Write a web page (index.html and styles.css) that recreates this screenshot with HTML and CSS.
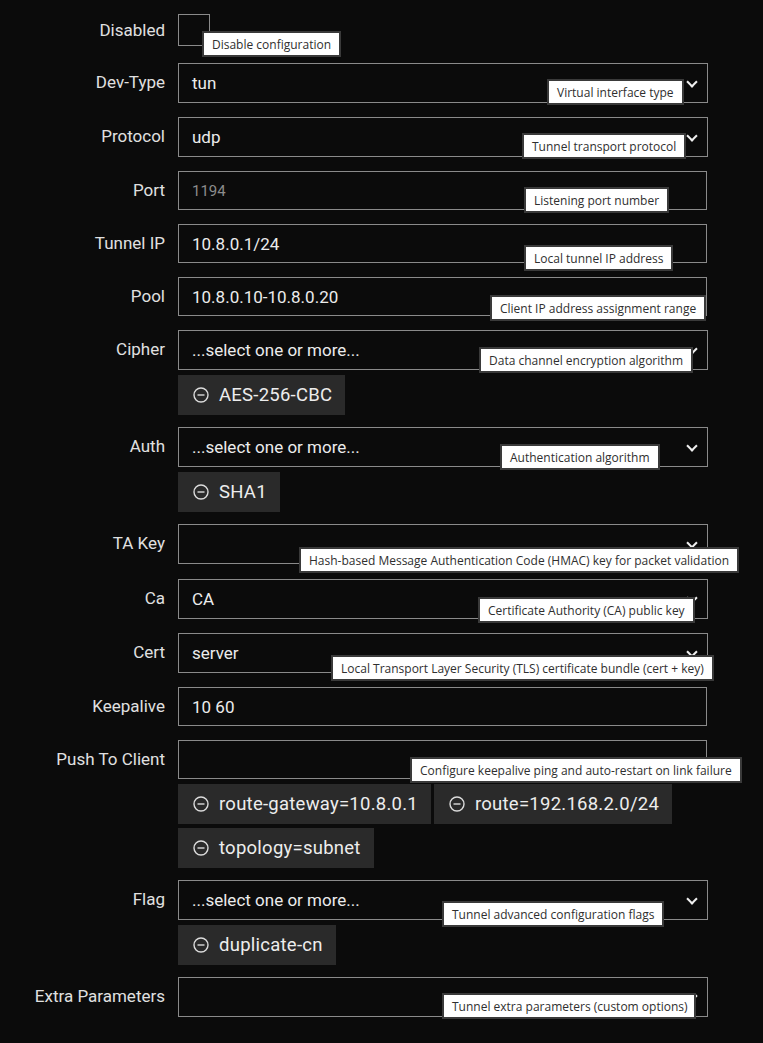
FILE: index.html
```html
<!DOCTYPE html>
<html lang="en">
<head>
<meta charset="utf-8">
<title>Tunnel settings</title>
<link rel="stylesheet" href="styles.css">
</head>
<body>
<form class="form">

  <div class="row row-check">
    <label class="lbl">Disabled</label>
    <div class="field">
      <span class="checkbox"></span>
      <span class="tip tip-disabled">Disable configuration</span>
    </div>
  </div>

  <div class="row">
    <label class="lbl">Dev-Type</label>
    <div class="field">
      <div class="box select"><span class="val">tun</span></div>
      <span class="tip tip-devtype">Virtual interface type</span>
    </div>
  </div>

  <div class="row">
    <label class="lbl">Protocol</label>
    <div class="field">
      <div class="box select"><span class="val">udp</span></div>
      <span class="tip tip-proto">Tunnel transport protocol</span>
    </div>
  </div>

  <div class="row">
    <label class="lbl">Port</label>
    <div class="field">
      <div class="box text"><span class="val placeholder">1194</span></div>
      <span class="tip tip-port">Listening port number</span>
    </div>
  </div>

  <div class="row">
    <label class="lbl">Tunnel IP</label>
    <div class="field">
      <div class="box text"><span class="val">10.8.0.1/24</span></div>
      <span class="tip tip-tunip">Local tunnel IP address</span>
    </div>
  </div>

  <div class="row">
    <label class="lbl">Pool</label>
    <div class="field">
      <div class="box text"><span class="val">10.8.0.10-10.8.0.20</span></div>
      <span class="tip tip-pool">Client IP address assignment range</span>
    </div>
  </div>

  <div class="row has-chips">
    <label class="lbl">Cipher</label>
    <div class="field">
      <div class="box select"><span class="val">...select one or more...</span></div>
      <div class="chips">
        <span class="chip"><svg class="minus" viewBox="0 0 16 16"><circle cx="8" cy="8" r="7"/><path d="M4.5 8h7"/></svg>AES-256-CBC</span>
      </div>
      <span class="tip tip-cipher">Data channel encryption algorithm</span>
    </div>
  </div>

  <div class="row has-chips">
    <label class="lbl">Auth</label>
    <div class="field">
      <div class="box select"><span class="val">...select one or more...</span></div>
      <div class="chips">
        <span class="chip"><svg class="minus" viewBox="0 0 16 16"><circle cx="8" cy="8" r="7"/><path d="M4.5 8h7"/></svg>SHA1</span>
      </div>
      <span class="tip tip-auth">Authentication algorithm</span>
    </div>
  </div>

  <div class="row row-takey">
    <label class="lbl">TA Key</label>
    <div class="field">
      <div class="box select"><span class="val"></span></div>
      <span class="tip tip-takey">Hash-based Message Authentication Code (HMAC) key for packet validation</span>
    </div>
  </div>

  <div class="row">
    <label class="lbl">Ca</label>
    <div class="field">
      <div class="box select"><span class="val">CA</span></div>
      <span class="tip tip-ca">Certificate Authority (CA) public key</span>
    </div>
  </div>

  <div class="row">
    <label class="lbl">Cert</label>
    <div class="field">
      <div class="box select"><span class="val">server</span></div>
      <span class="tip tip-cert">Local Transport Layer Security (TLS) certificate bundle (cert + key)</span>
    </div>
  </div>

  <div class="row">
    <label class="lbl">Keepalive</label>
    <div class="field">
      <div class="box text"><span class="val">10 60</span></div>
    </div>
  </div>

  <div class="row has-chips">
    <label class="lbl">Push To Client</label>
    <div class="field">
      <div class="box text"><span class="val"></span></div>
      <div class="chips">
        <span class="chip"><svg class="minus" viewBox="0 0 16 16"><circle cx="8" cy="8" r="7"/><path d="M4.5 8h7"/></svg>route-gateway=10.8.0.1</span>
        <span class="chip"><svg class="minus" viewBox="0 0 16 16"><circle cx="8" cy="8" r="7"/><path d="M4.5 8h7"/></svg>route=192.168.2.0/24</span>
        <span class="chip"><svg class="minus" viewBox="0 0 16 16"><circle cx="8" cy="8" r="7"/><path d="M4.5 8h7"/></svg>topology=subnet</span>
      </div>
      <span class="tip tip-push">Configure keepalive ping and auto-restart on link failure</span>
    </div>
  </div>

  <div class="row has-chips">
    <label class="lbl">Flag</label>
    <div class="field">
      <div class="box select"><span class="val">...select one or more...</span></div>
      <div class="chips">
        <span class="chip"><svg class="minus" viewBox="0 0 16 16"><circle cx="8" cy="8" r="7"/><path d="M4.5 8h7"/></svg>duplicate-cn</span>
      </div>
      <span class="tip tip-flag">Tunnel advanced configuration flags</span>
    </div>
  </div>

  <div class="row">
    <label class="lbl">Extra Parameters</label>
    <div class="field">
      <div class="box select"><span class="val"></span></div>
      <span class="tip tip-extra">Tunnel extra parameters (custom options)</span>
    </div>
  </div>

</form>
</body>
</html>
```

FILE: styles.css
```css
html, body {
  margin: 0;
  background: #0b0b0b;
}

body {
  padding-top: 14px;
  font-family: Roboto, "Liberation Sans", sans-serif;
  color: #e6e6e6;
}

.form {
  display: flex;
  flex-direction: column;
}

/* one label + control line */
.row {
  display: grid;
  grid-template-columns: 165px 530px;
  column-gap: 13px;
  align-items: start;
  margin-bottom: 14px;
}

.row.has-chips {
  margin-bottom: 12px;
}

.row-check {
  margin-bottom: 17px;
}

.row-takey {
  margin-bottom: 15px;
}

.lbl {
  font-size: 17px;
  line-height: 39px;
  text-align: right;
  color: #e0e0e0;
  white-space: nowrap;
}

.row-check .lbl {
  line-height: 32px;
}

.field {
  position: relative;
}

.checkbox {
  display: block;
  width: 30px;
  height: 30px;
  border: 1px solid #8a8a8a;
}

.box {
  position: relative;
  box-sizing: border-box;
  height: 40px;
  border: 1px solid #8a8a8a;
  padding: 0 13px;
  display: flex;
  align-items: center;
}

.box.text {
  width: 529px;
  height: 39px;
}

.val {
  font-size: 17px;
  color: #ececec;
  white-space: nowrap;
}

.val.placeholder {
  color: #8c8c8c;
  font-size: 15px;
}

/* dropdown chevron */
.box.select::after {
  content: "";
  position: absolute;
  right: 11px;
  top: 14px;
  width: 6px;
  height: 6px;
  border-right: 2px solid #f0f0f0;
  border-bottom: 2px solid #f0f0f0;
  transform: rotate(45deg);
}

/* selected values */
.chips {
  display: flex;
  flex-wrap: wrap;
  gap: 4px 3px;
  margin-top: 5px;
}

.chip {
  box-sizing: border-box;
  height: 40px;
  display: inline-flex;
  align-items: center;
  gap: 10px;
  padding: 0 13px 0 15px;
  background: #2a2a2a;
  color: #ededed;
  font-size: 18.5px;
  letter-spacing: 0.25px;
  white-space: nowrap;
}

.minus {
  width: 16px;
  height: 16px;
  fill: none;
  stroke: #dcdcdc;
  stroke-width: 1.4;
  flex: none;
}

/* hover help bubbles */
.tip {
  position: absolute;
  z-index: 2;
  box-sizing: border-box;
  height: 26px;
  padding: 0 8px;
  display: flex;
  align-items: center;
  background: #ffffff;
  border: 2px solid #3a3a3a;
  color: #2f2f2f;
  font-family: "Open Sans", "Noto Sans", sans-serif;
  font-size: 12px;
  white-space: nowrap;
}

.tip-disabled { left: 24px;  top: 17px; }
.tip-devtype  { left: 369px; top: 16px; }
.tip-proto    { left: 344px; top: 16px; }
.tip-port     { left: 346px; top: 16px; }
.tip-tunip    { left: 346px; top: 21px; }
.tip-pool     { left: 312px; top: 18px; }
.tip-cipher   { left: 301px; top: 17px; }
.tip-auth     { left: 322px; top: 17px; }
.tip-takey    { left: 121px; top: 23px; }
.tip-ca       { left: 300px; top: 18px; }
.tip-cert     { left: 153px; top: 22px; }
.tip-push     { left: 232px; top: 17px; }
.tip-flag     { left: 264px; top: 21px; }
.tip-extra    { left: 264px; top: 16px; padding-right: 6px; }
```
